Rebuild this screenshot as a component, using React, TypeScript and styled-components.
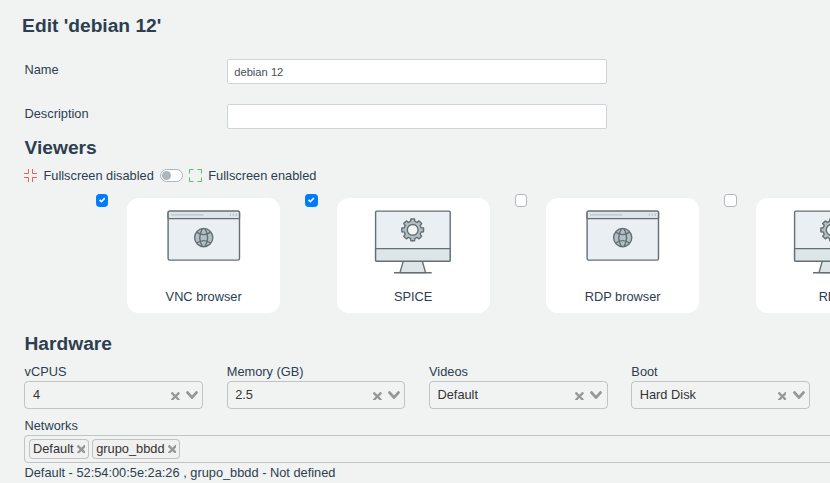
import React from 'react';
import styled, { createGlobalStyle } from 'styled-components';

const GlobalStyle = createGlobalStyle`
  *, *::before, *::after { box-sizing: border-box; }
  body {
    margin: 0;
    background: #f1f3f2;
    color: #2c3e50;
    font-family: "Liberation Sans", Arial, sans-serif;
    font-size: 12.8px;
    line-height: 16px;
    overflow: hidden;
  }
`;

const Page = styled.main`
  width: 830px;
  height: 483px;
  overflow: hidden;
  padding: 14px 0 0 24.5px;
`;

const Title = styled.h1`
  margin: 0 0 21px -2.4px;
  font-size: 19.2px;
  line-height: 24px;
  height: 24px;
`;

const SectionTitle = styled.h2<{ $gap: number }>`
  margin: 0 0 ${(p) => p.$gap}px;
  font-size: 19.2px;
  line-height: 24px;
  height: 24px;
`;

const FormRow = styled.div<{ $height: number }>`
  display: grid;
  grid-template-columns: 202.3px 380px;
  align-items: start;
  height: ${(p) => p.$height}px;
`;

const FieldLabel = styled.label<{ $top: number }>`
  padding-top: ${(p) => p.$top}px;
`;

const TextInput = styled.input`
  height: 25px;
  width: 380px;
  padding: 1px 6.4px 0;
  border: 1px solid #ced4da;
  border-radius: 2px;
  background: #fff;
  color: #495057;
  font: 11.2px "Liberation Sans", Arial, sans-serif;
  outline: none;
`;

const FullscreenRow = styled.div`
  display: flex;
  align-items: center;
  height: 16px;
  margin-bottom: 7px;
`;

const FullscreenIcon = styled.svg<{ $color: string; $gap: string }>`
  width: 13px;
  height: 13px;
  flex: none;
  fill: none;
  stroke: ${(p) => p.$color};
  margin: ${(p) => p.$gap};
`;

const Switch = styled.span`
  display: flex;
  align-items: center;
  width: 23px;
  height: 13px;
  padding-left: 1px;
  margin: -1px 6px 0 6px;
  border: 1px solid #adb5bd;
  border-radius: 7px;
  background: #fff;
  &::before {
    content: '';
    width: 9.5px;
    height: 9.5px;
    border-radius: 50%;
    background: #adb5bd;
  }
`;

const ViewerList = styled.div`
  display: flex;
  width: 1000px;
  height: 141px;
  padding-left: 71px;
`;

const ViewerItem = styled.div`
  display: flex;
  flex: none;
  width: 209.5px;
  padding-top: 2px;
`;

const CheckMark = styled.span<{ $on: boolean }>`
  display: flex;
  align-items: center;
  justify-content: center;
  width: 12.8px;
  height: 12.8px;
  margin: 1px 18.8px 0 0;
  border: 1px solid ${(p) => (p.$on ? '#007bff' : '#adb5bd')};
  border-radius: 3.2px;
  background: ${(p) => (p.$on ? '#007bff' : '#fff')};
`;

const ViewerCard = styled.div`
  display: flex;
  flex-direction: column;
  align-items: center;
  width: 153.4px;
  height: 115px;
  margin-top: 5px;
  padding: 10px 0.3px 0 0;
  border-radius: 12px;
  background: #fff;
`;

const Artwork = styled.svg`
  width: 80px;
  height: 68px;
  margin-bottom: 13px;
  stroke: #647073;
  stroke-width: 1.4;
  stroke-linejoin: round;
`;

const Columns = styled.div`
  display: grid;
  grid-template-columns: repeat(4, 178.6px);
  column-gap: 23.7px;
  margin-bottom: 9px;
`;

const Caption = styled.div`
  height: 17px;
  line-height: 16px;
`;

const SelectBox = styled.div`
  display: flex;
  align-items: center;
  height: 28px;
  margin: 0 0.1px 0 -0.1px;
  padding: 0 4.2px 0 7.5px;
  border: 1px solid rgba(60, 60, 60, 0.26);
  border-radius: 4px;
  color: #333;
`;

const SelectValue = styled.span`
  flex: 1;
`;

const ControlIcon = styled.svg<{ $gap: string }>`
  flex: none;
  fill: rgba(60, 60, 60, 0.5);
  margin: ${(p) => p.$gap};
`;

const TagBox = styled.div`
  display: flex;
  align-items: center;
  gap: 3.2px;
  width: 860px;
  height: 28px;
  margin: 0 0 2px -0.5px;
  padding-left: 4px;
  border: 1px solid rgba(60, 60, 60, 0.26);
  border-radius: 4px;
`;

const Tag = styled.span`
  display: flex;
  align-items: center;
  height: 20px;
  padding: 0 2.6px 0 3px;
  border: 1px solid rgba(60, 60, 60, 0.26);
  border-radius: 4px;
  background: #f0f0f0;
  color: #333;
`;

const CROSS =
  'M6.895455 5l2.842897-2.842898c.348864-.348863.348864-.914488 0-1.263636L9.106534.261648c-.348864-.348864-.914489-.348864-1.263636 0L5 3.104545 2.157102.261648c-.348863-.348864-.914488-.348864-1.263636 0L.261648.893466c-.348864.348864-.348864.914489 0 1.263636L3.104545 5 .261648 7.842898c-.348864.348863-.348864.914488 0 1.263636l.631818.631818c.348864.348864.914773.348864 1.263636 0L5 6.895455l2.842898 2.842897c.348863.348864.914772.348864 1.263636 0l.631818-.631818c.348864-.348864.348864-.914489 0-1.263636L6.895455 5z';
const CHEVRON =
  'M9.211364 7.59931l4.48338-4.867229c.407008-.441854.407008-1.158247 0-1.60046l-.73712-.80023c-.407008-.441854-1.066904-.441854-1.474243 0L7 5.198617 2.51662.33139c-.407008-.441853-1.066904-.441853-1.474243 0l-.737121.80023c-.407008.441854-.407008 1.158248 0 1.600461l4.48338 4.867228L7 10l2.211364-2.40069z';

const Cross = ({ gap }: { gap: string }) => (
  <ControlIcon $gap={gap} width="8.8" height="8.8" viewBox="0 0 10 10">
    <path d={CROSS} />
  </ControlIcon>
);

const BrowserArt = () => (
  <Artwork viewBox="0 0 80 68">
    <rect x="4.1" y="3.1" width="71.4" height="49" rx="1.6" fill="#e9eff2" />
    <path d="M4.1 10.6V4.6q0-1.5 1.5-1.5h68.4q1.5 0 1.5 1.5v6z" fill="#dde5e8" />
    <path d="M7 6.8h32.5M66.3 5.4v2.7M69.4 5.4v2.7M72.4 5.4v2.7" stroke="#b9c4c8" strokeWidth="1.2" />
    <circle cx="39.7" cy="29.6" r="9.1" fill="#b3bfc4" />
    <g fill="none">
      <path d="M38.4 20.6q-5.2 9 0 18M41 20.6q5.2 9 0 18M32.6 24.2q7.1 4.8 14.2 0M32.6 35q7.1-4.8 14.2 0" />
    </g>
  </Artwork>
);

const gearPath = (() => {
  const points: string[] = [];
  for (let i = 0; i < 8; i += 1) {
    const offsets: [number, number][] = [[-0.25, 8.7], [-0.17, 11], [0.17, 11], [0.25, 8.7]];
    offsets.forEach(([delta, radius]) => {
      const angle = (i * Math.PI) / 4 + delta;
      points.push(`${(39.7 + radius * Math.cos(angle)).toFixed(2)} ${(21.9 + radius * Math.sin(angle)).toFixed(2)}`);
    });
  }
  return `M${points.join('L')}Z`;
})();

const MonitorArt = () => (
  <Artwork viewBox="0 0 80 68">
    <path d="M30.2 53.4h19.2l3.2 11.2H27z" fill="#dde5e8" />
    <rect x="2.6" y="3.1" width="74.6" height="50.2" rx="1.2" fill="#e9eff2" />
    <path d="M2.6 40.6h74.6v11.5q0 1.2-1.2 1.2H3.8q-1.2 0-1.2-1.2z" fill="#dde5e8" />
    <path d="M21 64.8h37.7" />
    <path d={gearPath} fill="#b3bfc4" />
    <circle cx="39.7" cy="21.9" r="5.4" fill="#f3f6f7" />
  </Artwork>
);

const viewers = [
  { name: 'VNC browser', enabled: true, browser: true },
  { name: 'SPICE', enabled: true, browser: false },
  { name: 'RDP browser', enabled: false, browser: true },
  { name: 'RDP', enabled: false, browser: false },
];

const hardware = [
  ['vCPUS', '4'],
  ['Memory (GB)', '2.5'],
  ['Videos', 'Default'],
  ['Boot', 'Hard Disk'],
];

export default function App() {
  return (
    <Page>
      <GlobalStyle />
      <Title>Edit 'debian 12'</Title>
      <FormRow $height={45}>
        <FieldLabel $top={3} htmlFor="name">Name</FieldLabel>
        <TextInput id="name" defaultValue="debian 12" />
      </FormRow>
      <FormRow $height={32}>
        <FieldLabel $top={2} htmlFor="description">Description</FieldLabel>
        <TextInput id="description" />
      </FormRow>

      <SectionTitle $gap={8}>Viewers</SectionTitle>
      <FullscreenRow>
        <FullscreenIcon $color="#e4606d" $gap="-1px 6.5px 0 -0.5px" viewBox="0 0 13 13">
          <path d="M0 4.5h4.5V0M8.5 0v4.5H13M0 8.5h4.5V13M8.5 13V8.5H13" />
        </FullscreenIcon>
        Fullscreen disabled
        <Switch />
        <FullscreenIcon $color="#5cb874" $gap="-1px 6.5px 0 0" viewBox="0 0 13 13">
          <path d="M.5 4.5v-4h4M8.5.5h4v4M.5 8.5v4h4M8.5 12.5h4v-4" />
        </FullscreenIcon>
        Fullscreen enabled
      </FullscreenRow>
      <ViewerList>
        {viewers.map((viewer) => (
          <ViewerItem key={viewer.name}>
            <CheckMark $on={viewer.enabled}>
              {viewer.enabled && (
                <svg width="6.4" height="6.4" viewBox="0 0 8 8">
                  <path fill="#fff" d="M6.564.75l-3.59 3.612-1.538-1.55L0 4.26l2.974 2.99L8 2.193z" />
                </svg>
              )}
            </CheckMark>
            <ViewerCard>
              {viewer.browser ? <BrowserArt /> : <MonitorArt />}
              {viewer.name}
            </ViewerCard>
          </ViewerItem>
        ))}
      </ViewerList>

      <SectionTitle $gap={8}>Hardware</SectionTitle>
      <Columns>
        {hardware.map(([label, value]) => (
          <div key={label}>
            <Caption>{label}</Caption>
            <SelectBox>
              <SelectValue>{value}</SelectValue>
              <Cross gap="2px 6.3px 0 0" />
              <ControlIcon $gap="0" width="12" height="8.5" viewBox="0 0 14 10">
                <path d={CHEVRON} />
              </ControlIcon>
            </SelectBox>
          </div>
        ))}
      </Columns>
      <Caption>Networks</Caption>
      <TagBox>
        {['Default', 'grupo_bbdd'].map((network) => (
          <Tag key={network}>
            {network}
            <Cross gap="0 0 0 3.1px" />
          </Tag>
        ))}
      </TagBox>
      <div>Default - 52:54:00:5e:2a:26 , grupo_bbdd - Not defined</div>
    </Page>
  );
}
